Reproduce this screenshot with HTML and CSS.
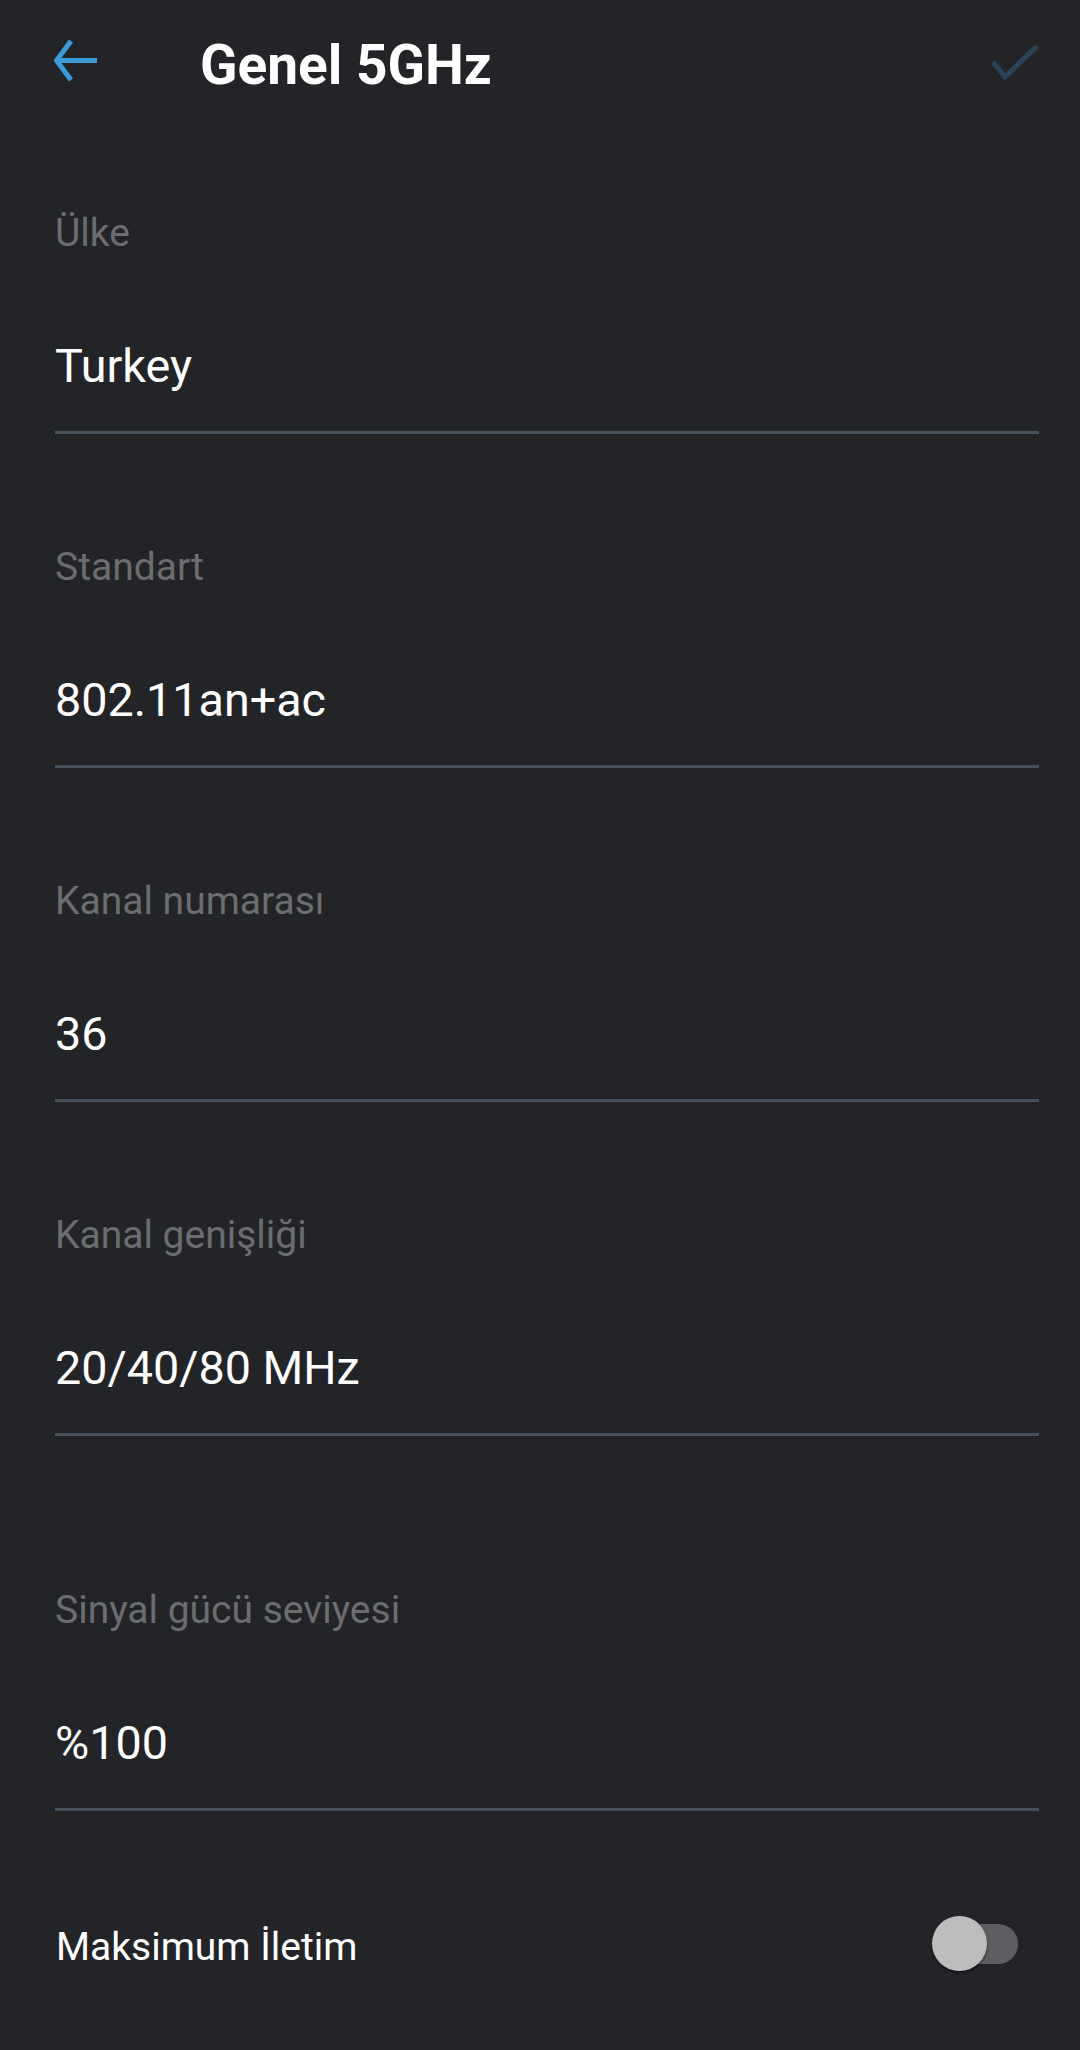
FILE: index.html
```html
<!DOCTYPE html>
<html lang="tr">
<head>
<meta charset="utf-8">
<title>Genel 5GHz</title>
<link rel="stylesheet" href="styles.css">
</head>
<body>
<div class="screen">
  <header class="topbar">
    <svg class="back" width="44" height="44" viewBox="0 0 44 44" aria-hidden="true">
      <path d="M17 2 L2.5 21.5 L17 41 M2.5 21.5 H43" fill="none" stroke="#3d9ad8" stroke-width="5" stroke-linejoin="miter"/>
    </svg>
    <h1 class="title">Genel 5GHz</h1>
    <svg class="check" width="50" height="40" viewBox="0 0 50 40" aria-hidden="true">
      <path d="M3 18 L15 33 L47 2" fill="none" stroke="#2b4356" stroke-width="5"/>
    </svg>
  </header>

  <div class="field">
    <div class="label">Ülke</div>
    <div class="value">Turkey</div>
  </div>
  <div class="field">
    <div class="label">Standart</div>
    <div class="value">802.11an+ac</div>
  </div>
  <div class="field">
    <div class="label">Kanal numarası</div>
    <div class="value">36</div>
  </div>
  <div class="field">
    <div class="label">Kanal genişliği</div>
    <div class="value">20/40/80 MHz</div>
  </div>
  <div class="field field-spaced">
    <div class="label">Sinyal gücü seviyesi</div>
    <div class="value">%100</div>
  </div>

  <div class="switch-row">
    <span class="switch-label">Maksimum İletim</span>
    <span class="switch">
      <span class="track"></span>
      <span class="knob"></span>
    </span>
  </div>
</div>
</body>
</html>
```

FILE: styles.css
```css
html, body {
  margin: 0;
  padding: 0;
  background: #232428;
}

body {
  font-family: Roboto, "Noto Sans", "Liberation Sans", sans-serif;
  color: #ffffff;
}

.screen {
  width: 1080px;
  min-height: 2050px;
  background: #232428;
}

.topbar {
  display: flex;
  align-items: flex-start;
  height: 100px;
  padding-left: 54px;
  padding-right: 40px;
  box-sizing: border-box;
}

.back {
  display: block;
  margin-top: 39px;
  flex: none;
}

.title {
  margin: 37px 0 0 102px;
  font-size: 55px;
  line-height: 56px;
  font-weight: 700;
  color: #ffffff;
}

.check {
  display: block;
  margin-left: auto;
  margin-top: 44px;
  flex: none;
}

.field {
  margin: 0 41px 0 55px;
  padding-top: 109px;
  border-bottom: 3px solid #46525c;
}

.field-spaced {
  padding-top: 150px;
}

.label {
  font-size: 39px;
  line-height: 48px;
  color: #6c6d70;
}

.value {
  margin-top: 81px;
  padding-bottom: 37px;
  font-size: 46.7px;
  line-height: 56px;
  color: #ffffff;
}

.switch-row {
  display: flex;
  align-items: center;
  justify-content: space-between;
  margin: 108px 62px 0 56px;
  height: 56px;
}

.switch-label {
  font-size: 39px;
  line-height: 56px;
  color: #ffffff;
}

.switch {
  position: relative;
  width: 86px;
  height: 56px;
  flex: none;
  margin-top: -6px;
}

.track {
  position: absolute;
  right: 0;
  top: 8px;
  width: 72px;
  height: 40px;
  border-radius: 20px;
  background: #5d5e62;
}

.knob {
  position: absolute;
  left: 0;
  top: 0;
  width: 55px;
  height: 55px;
  border-radius: 50%;
  background: #bdbdbd;
  box-shadow: 0 2px 3px rgba(0, 0, 0, 0.45);
}
```
